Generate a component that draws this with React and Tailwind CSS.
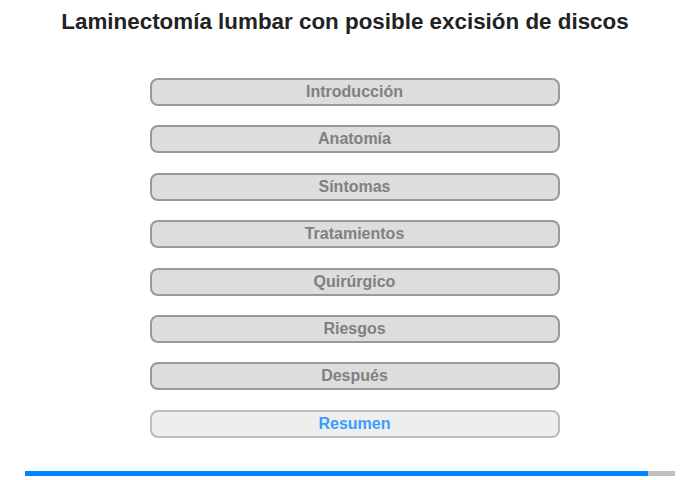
const items = ["Introducción", "Anatomía", "Síntomas", "Tratamientos", "Quirúrgico", "Riesgos", "Después"];

export default function App() {
  return (
    <div className="w-[700px] h-[480px] bg-white font-['Liberation_Sans',Arial,sans-serif] flex flex-col">
      <h1 className="text-[22.4px] leading-[24px] font-bold text-[#222] text-center pt-[10px] pr-[10px]">
        Laminectomía lumbar con posible excisión de discos
      </h1>
      <div className="flex flex-col items-center gap-[19.4px] mt-[44px] pl-[9px]">
        {items.map((t) => (
          <div
            key={t}
            className="w-[410px] h-[28px] rounded-[8px] border-2 border-[#999] bg-[#ddd] text-[#808080] font-bold text-[16px] flex items-center justify-center"
          >
            {t}
          </div>
        ))}
        <div className="w-[410px] h-[28px] rounded-[8px] border-2 border-[#bbb] bg-[#eee] text-[#3a9cff] font-bold text-[16px] flex items-center justify-center">
          Resumen
        </div>
      </div>
      <div className="mt-auto mb-[4px] mx-[25px] h-[5px] bg-[#c0c0c0] flex">
        <div className="w-[623px] bg-[#0084ff]" />
      </div>
    </div>
  );
}
